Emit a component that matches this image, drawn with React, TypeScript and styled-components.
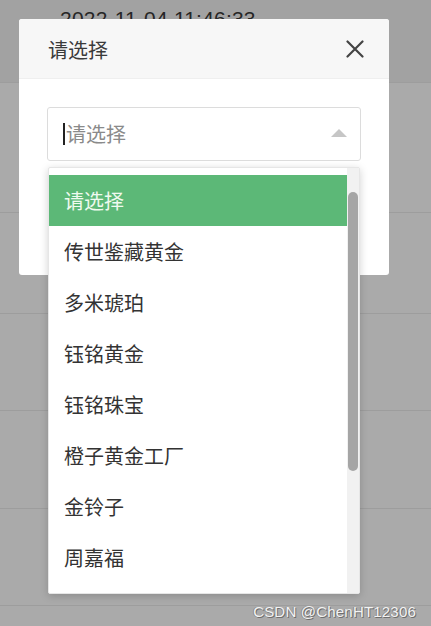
import React from "react";
import styled, { createGlobalStyle } from "styled-components";

const Global = createGlobalStyle`
  html, body { margin: 0; padding: 0; }
  body { font-family: "Noto Sans CJK SC", "Noto Sans", sans-serif; }
`;

const Page = styled.div`
  position: relative;
  width: 431px;
  height: 626px;
  overflow: hidden;
  background: #aaaaaa;
`;

const BgList = styled.div`
  display: flex;
  flex-direction: column;
`;

const BgRow = styled.div<{ $h: number; $bg?: string }>`
  height: ${(p) => p.$h}px;
  box-sizing: border-box;
  border-bottom: 1px solid #9d9d9d;
  background: ${(p) => p.$bg || "#aaaaaa"};
  padding-left: 60px;
`;

const Stamp = styled.div`
  font-family: "Liberation Sans", Arial, sans-serif;
  font-size: 21px;
  color: #262626;
  line-height: 1;
  padding-top: 8px;
  letter-spacing: 0.2px;
`;

const Modal = styled.div`
  position: absolute;
  left: 19px;
  top: 19px;
  width: 370px;
  height: 256px;
  background: #fff;
  border-radius: 3px;
  overflow: hidden;
  display: flex;
  flex-direction: column;
`;

const Header = styled.div`
  height: 59px;
  flex: none;
  background: #f7f7f7;
  border-bottom: 1px solid #efefef;
  display: flex;
  align-items: center;
  justify-content: space-between;
  padding: 0 25px 0 29px;
`;

const Title = styled.div`
  font-size: 20px;
  color: #3a3a3a;
  line-height: 1;
  padding-top: 2px;
`;

const Close = styled.button`
  border: none;
  background: none;
  padding: 0;
  width: 18px;
  height: 18px;
  display: flex;
  align-items: center;
  justify-content: center;
  cursor: pointer;
`;

const Body = styled.div`
  padding: 28px 28px 0 28px;
`;

const SelectBox = styled.div`
  height: 54px;
  box-sizing: border-box;
  border: 1px solid #dcdcdc;
  border-radius: 3px;
  display: flex;
  align-items: center;
  justify-content: space-between;
  padding: 0 13px 0 15px;
`;

const Placeholder = styled.div`
  display: flex;
  align-items: center;
  font-size: 20px;
  color: #8a8a8a;
  line-height: 1;
`;

const Caret = styled.span`
  width: 2px;
  height: 22px;
  background: #222;
  margin-right: 1px;
`;

const Triangle = styled.span`
  width: 0;
  height: 0;
  border-left: 8.5px solid transparent;
  border-right: 8.5px solid transparent;
  border-bottom: 8px solid #c6c6c6;
  margin-top: -2px;
`;

const Dropdown = styled.div`
  position: absolute;
  left: 48px;
  top: 167px;
  width: 312px;
  height: 427px;
  background: #fff;
  border: 1px solid #e6e6e6;
  border-radius: 2px;
  box-sizing: border-box;
  box-shadow: 0 2px 8px rgba(0, 0, 0, 0.18);
  display: flex;
  overflow: hidden;
`;

const Options = styled.div`
  flex: 1;
  padding-top: 7px;
  display: flex;
  flex-direction: column;
`;

const Option = styled.div<{ $active?: boolean }>`
  height: 51px;
  flex: none;
  display: flex;
  align-items: center;
  padding-left: 15px;
  font-size: 20px;
  line-height: 1;
  color: ${(p) => (p.$active ? "#effaef" : "#333")};
  background: ${(p) => (p.$active ? "#5cb877" : "#fff")};
`;

const Track = styled.div`
  width: 12px;
  flex: none;
  background: #f1f1f1;
  padding-top: 24px;
  box-sizing: border-box;
  display: flex;
  justify-content: center;
`;

const Thumb = styled.div`
  width: 10px;
  height: 279px;
  border-radius: 5px;
  background: #a5a5a5;
`;

const Watermark = styled.div`
  position: absolute;
  right: 15px;
  bottom: 6px;
  font-family: "Liberation Sans", Arial, sans-serif;
  font-size: 15px;
  color: #f2f2f2;
  text-shadow: 1px 1px 0 #6e6e6e, -1px 0 0 #8a8a8a;
  letter-spacing: 0.2px;
`;

const options = [
  "请选择",
  "传世鉴藏黄金",
  "多米琥珀",
  "钰铭黄金",
  "钰铭珠宝",
  "橙子黄金工厂",
  "金铃子",
  "周嘉福",
];

export default function App() {
  return (
    <Page>
      <Global />
      <BgList>
        <BgRow $h={83} $bg="#a2a2a2">
          <Stamp>2022-11-04 11:46:33</Stamp>
        </BgRow>
        <BgRow $h={130} />
        <BgRow $h={101} />
        <BgRow $h={97} />
        <BgRow $h={98} />
        <BgRow $h={97} />
      </BgList>
      <Modal>
        <Header>
          <Title>请选择</Title>
          <Close aria-label="close">
            <svg width="18" height="18" viewBox="0 0 18 18">
              <path d="M1.5 1.5 L16.5 16.5 M16.5 1.5 L1.5 16.5" stroke="#444" strokeWidth="2.2" strokeLinecap="round" />
            </svg>
          </Close>
        </Header>
        <Body>
          <SelectBox>
            <Placeholder>
              <Caret />
              请选择
            </Placeholder>
            <Triangle />
          </SelectBox>
        </Body>
      </Modal>
      <Dropdown>
        <Options>
          {options.map((o, i) => (
            <Option key={o} $active={i === 0}>
              {o}
            </Option>
          ))}
        </Options>
        <Track>
          <Thumb />
        </Track>
      </Dropdown>
      <Watermark>CSDN @ChenHT12306</Watermark>
    </Page>
  );
}
